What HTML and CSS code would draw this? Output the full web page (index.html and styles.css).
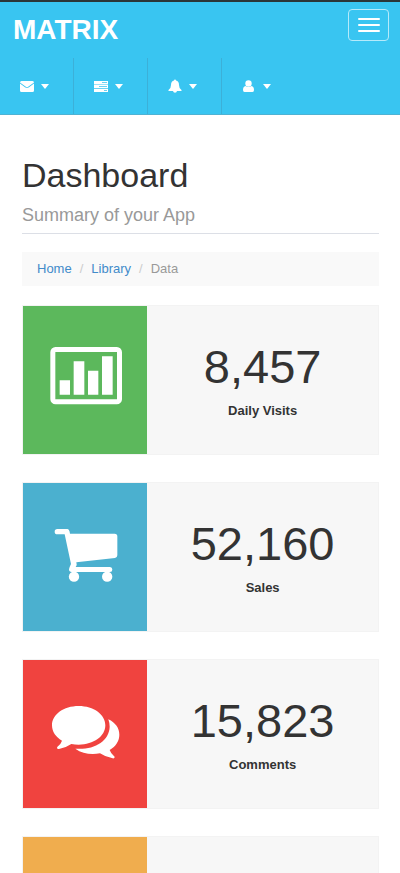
FILE: index.html
```html
<!DOCTYPE html>
<html lang="en">
<head>
<meta charset="utf-8">
<meta name="viewport" content="width=device-width, initial-scale=1">
<title>Matrix</title>
<link rel="stylesheet" href="styles.css">
</head>
<body>
<header class="topbar">
  <div class="topbar-head">
    <a class="brand" href="#">MATRIX</a>
    <button class="toggle" type="button" aria-label="Toggle navigation"><span class="bar"></span><span class="bar"></span><span class="bar"></span></button>
  </div>
  <nav class="menu">
    <a class="menu-item" href="#" aria-label="Messages">
      <svg class="glyph" viewBox="0 0 14 14"><path d="M0 3.500Q0 2 1.500 2H12.500Q14 2 14 3.500L8.500 7.500Q7 8.500 5.500 7.500ZM0 4.500L5 8.200Q7 9.500 9 8.200L14 4.500V11.500Q14 13 12.500 13H1.500Q0 13 0 11.500Z"/></svg>
      <span class="caret"></span>
    </a>
    <a class="menu-item" href="#" aria-label="Tasks">
      <svg class="glyph" viewBox="0 0 14 14"><path fill-rule="evenodd" d="M0 2H14V5.500H0ZM8 3.300V4H13V3.300ZM0 6H14V9.200H0ZM5 7.300V8H13V7.300ZM0 10H14V13H0ZM10 11.200V12H13V11.200Z"/></svg>
      <span class="caret"></span>
    </a>
    <a class="menu-item" href="#" aria-label="Alerts">
      <svg class="glyph" viewBox="0 0 14 14"><path d="M7 0.500Q8 0.500 8 1.500Q11 2.300 11 6Q11 9.500 13.500 11V12H9Q8.700 13.700 7 13.700Q5.300 13.700 5 12H.5V11Q3 9.500 3 6Q3 2.300 6 1.500Q6 0.500 7 0.500Z"/></svg>
      <span class="caret"></span>
    </a>
    <a class="menu-item" href="#" aria-label="Account">
      <svg class="glyph" viewBox="0 0 14 14"><circle cx="6.500" cy="4.500" r="3.200"/><path d="M3.500 7Q6.500 9 9.500 7Q12 7.500 12 11Q12 13 10.500 13H2.500Q1 13 1 11Q1 7.500 3.500 7Z"/></svg>
      <span class="caret"></span>
    </a>
  </nav>
</header>
<main class="page">
  <h1 class="title">Dashboard</h1>
  <p class="subtitle">Summary of your App</p>
  <ol class="crumbs">
    <li><a href="#">Home</a></li>
    <li><a href="#">Library</a></li>
    <li>Data</li>
  </ol>
  <section class="card">
    <div class="card-icon green">
      <svg class="icon" viewBox="98 128 225 225"><rect x="112.500" y="147.500" width="200" height="157" rx="8" fill="none" stroke="#fff" stroke-width="15"/><path d="M133 240H164V283H133ZM175 183H207V283H175ZM218 211H249V283H218ZM260 168H292V283H260Z"/></svg>
    </div>
    <div class="card-body"><h2 class="number">8,457</h2><p class="label">Daily Visits</p></div>
  </section>
  <section class="card">
    <div class="card-icon blue">
      <svg class="icon" viewBox="98 133 225 225"><path d="M126 160H156Q162 160 164 174H298Q306 174 306 182V239Q306 246 299 247L183 260Q186 267 181 274H284Q291 274 291 281.500Q291 289 284 289H169Q161 289 161 281Q161 277 167 265L148 176H126Q118 176 118 168Q118 160 126 160Z"/><circle cx="176" cy="303" r="15.500"/><circle cx="275.500" cy="303" r="15.500"/></svg>
    </div>
    <div class="card-body"><h2 class="number">52,160</h2><p class="label">Sales</p></div>
  </section>
  <section class="card">
    <div class="card-icon red">
      <svg class="icon" viewBox="98 139 225 225"><path d="M190 166C235 166 270 191 270 224C270 257 235 282 190 282Q179 282 168 280Q152 291 131 295Q126 296 125 292Q125 289 128 287Q136 281 140 270C121 259 110 243 110 224C110 191 145 166 190 166Z"/><path d="M279 206C301 216 312 233 312 252C312 270 302 287 283 298Q287 309 295 315Q298 317 298 320Q297 324 292 323Q270 319 254 308C227 313 201 309 180 294C234 299 282 272 283 228Q283 217 279 206Z"/></svg>
    </div>
    <div class="card-body"><h2 class="number">15,823</h2><p class="label">Comments</p></div>
  </section>
  <section class="card">
    <div class="card-icon orange"></div>
    <div class="card-body"></div>
  </section>
</main>
</body>
</html>
```
FILE: styles.css
```css
* { box-sizing: border-box; }
html, body { height: 100%; overflow: hidden; }
body {
  margin: 0;
  background: #fff;
  color: #333;
  font: 13px/18px "Liberation Sans", Arial, sans-serif;
}
h1, h2, p, ol { margin: 0; padding: 0; }
a { color: #428bca; text-decoration: none; }

.topbar {
  background: #39c5f1;
  border-top: 2px solid #2b3638;
  border-bottom: 1px solid #4fb2d3;
}
.topbar-head {
  display: flex;
  justify-content: space-between;
  align-items: flex-start;
  height: 56px;
  padding: 7px 11px 0 13px;
}
.brand { color: #fff; font-size: 28px; line-height: 42px; font-weight: bold; }
.toggle {
  display: flex;
  flex-direction: column;
  align-items: center;
  justify-content: center;
  gap: 4px;
  width: 41px;
  height: 32px;
  padding: 0;
  background: transparent;
  border: 1px solid #b5eafb;
  border-radius: 4px;
}
.bar { width: 22px; height: 2px; border-radius: 1px; background: #fff; }

.menu { display: flex; }
.menu-item {
  display: flex;
  align-items: center;
  gap: 7px;
  width: 74px;
  height: 56px;
  padding-left: 20px;
  border-right: 1px solid #3cb0d8;
}
.menu-item:last-child { border-right: 0; }
.glyph { width: 14px; height: 14px; fill: #fff; }
.caret { border: 4px solid transparent; border-top: 5px solid #fff; border-bottom: 0; }

.page { padding: 40px 21px 0 22px; }
.title { font-size: 34px; line-height: 40px; font-weight: normal; }
.subtitle {
  padding: 8px 0 5px;
  border-bottom: 1px solid #dcdfe6;
  color: #999;
  font-size: 18px;
  line-height: 25px;
}
.crumbs {
  display: flex;
  margin: 18px 0 19px;
  padding: 8px 15px;
  background: #f9f9f9;
  color: #999;
  list-style: none;
}
.crumbs li + li::before { content: "/"; padding: 0 8px; color: #ccc; }

.card {
  display: flex;
  height: 150px;
  margin-bottom: 27px;
  background: #f7f7f7;
  border: 1px solid #f3f3f3;
}
.card-icon { display: flex; align-items: center; justify-content: center; width: 35%; }
.icon { width: 75px; height: 75px; fill: #fff; }
.card-body { flex: 1; padding-top: 35px; text-align: center; }
.number { font-size: 47px; line-height: 52px; font-weight: normal; }
.label { padding-top: 9px; font-weight: bold; }
.green { background: #5cb85c; }
.blue { background: #4bb0cf; }
.red { background: #f0433f; }
.orange { background: #f0ad4e; }
```
